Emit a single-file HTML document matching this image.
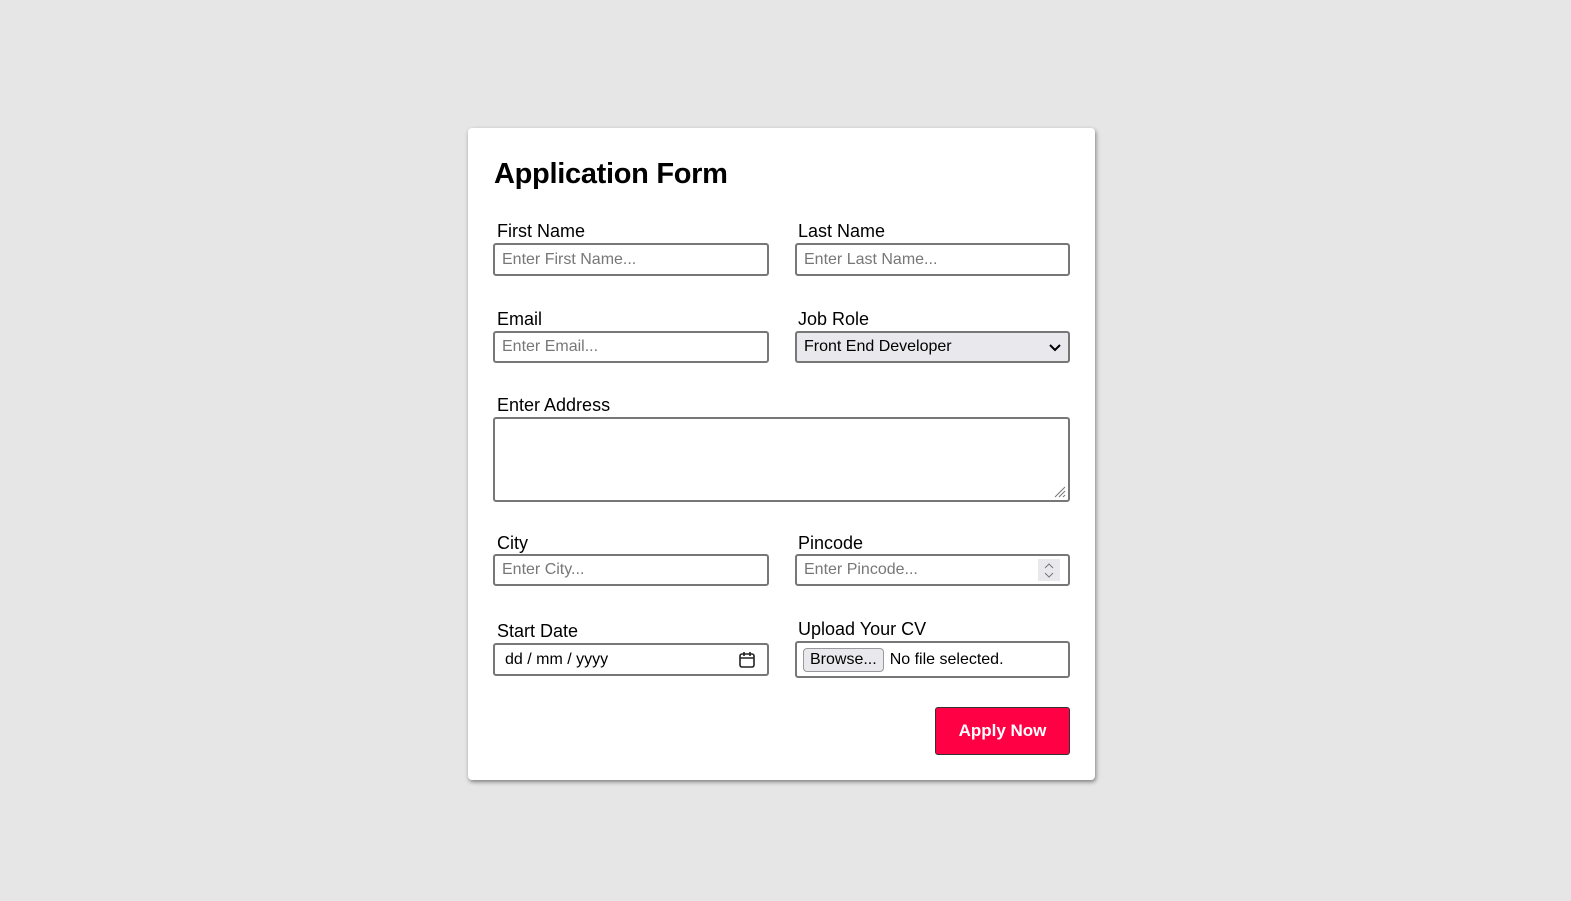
<!DOCTYPE html>
<html><head><style>
body{margin:0;width:1571px;height:901px;background:#e6e6e6;font-family:"Liberation Sans",sans-serif;position:relative;overflow:hidden}
.card{position:absolute;left:468px;top:128px;width:627px;height:652px;background:#fff;border-radius:4px;box-shadow:1px 2px 4px rgba(0,0,0,.45)}
.a{position:absolute}
h1{position:absolute;left:494px;top:158px;margin:0;font-size:29px;font-weight:bold;color:#000;letter-spacing:-.3px}
.l{position:absolute;font-size:18px;color:#000}
.i{position:absolute;box-sizing:border-box;border:2px solid #777;border-radius:3px;background:#fff;font-size:16px;color:#777;padding-left:7px;display:flex;align-items:center}
</style></head><body>
<div class="card"></div>
<h1>Application Form</h1>
<div class="l" style="left:497px;top:221px">First Name</div>
<div class="l" style="left:798px;top:221px">Last Name</div>
<div class="i" style="left:493px;top:243px;width:276px;height:33px">Enter First Name...</div>
<div class="i" style="left:795px;top:243px;width:275px;height:33px">Enter Last Name...</div>
<div class="l" style="left:497px;top:309px">Email</div>
<div class="l" style="left:798px;top:309px">Job Role</div>
<div class="i" style="left:493px;top:331px;width:276px;height:32px">Enter Email...</div>
<div class="i" style="left:795px;top:331px;width:275px;height:32px;background:#e9e9ed;color:#000">Front End Developer
<svg class="a" style="right:7px;top:9px" width="12" height="10" viewBox="0 0 12 10"><path d="M1 3l5 5 5-5" stroke="#000" stroke-width="2" fill="none"/></svg></div>
<div class="l" style="left:497px;top:395px">Enter Address</div>
<div class="i" style="left:493px;top:417px;width:577px;height:85px">
<svg class="a" style="right:2px;bottom:2px" width="14" height="14"><path d="M13 3L3 13M13 7L7 13M13 11L11 13" stroke="#777" stroke-width="1"/></svg></div>
<div class="l" style="left:497px;top:533px">City</div>
<div class="l" style="left:798px;top:533px">Pincode</div>
<div class="i" style="left:493px;top:554px;width:276px;height:32px">Enter City...</div>
<div class="i" style="left:795px;top:554px;width:275px;height:32px">Enter Pincode...
<div class="a" style="right:8px;top:3px;width:22px;height:22px;background:#e9e9ed"><svg width="22" height="22"><path d="M7 9l4-4 4 4M7 14l4 4 4-4" stroke="#777" fill="none"/></svg></div></div>
<div class="l" style="left:497px;top:621px">Start Date</div>
<div class="l" style="left:798px;top:619px">Upload Your CV</div>
<div class="i" style="left:493px;top:643px;width:276px;height:33px;color:#000;padding-left:10px">dd / mm / yyyy
<svg class="a" style="right:11px;top:6px" width="18" height="18" viewBox="0 0 18 18"><rect x="2" y="3" width="14" height="13" rx="2" stroke="#222" stroke-width="1.6" fill="none"/><path d="M2 7h14M6 1v4M12 1v4" stroke="#222" stroke-width="1.6"/></svg></div>
<div class="i" style="left:795px;top:641px;width:275px;height:37px;color:#000;padding-left:6px">
<span style="display:inline-block;border:1px solid #999;border-radius:4px;background:#e9e9ed;padding:2px 6px;margin-right:6px">Browse...</span>No file selected.</div>
<div class="a" style="left:935px;top:707px;width:135px;height:48px;box-sizing:border-box;background:#ff0044;border:1px solid #333;border-radius:3px;color:#fff;font-weight:bold;font-size:17px;display:flex;align-items:center;justify-content:center">Apply Now</div>
</body></html>
